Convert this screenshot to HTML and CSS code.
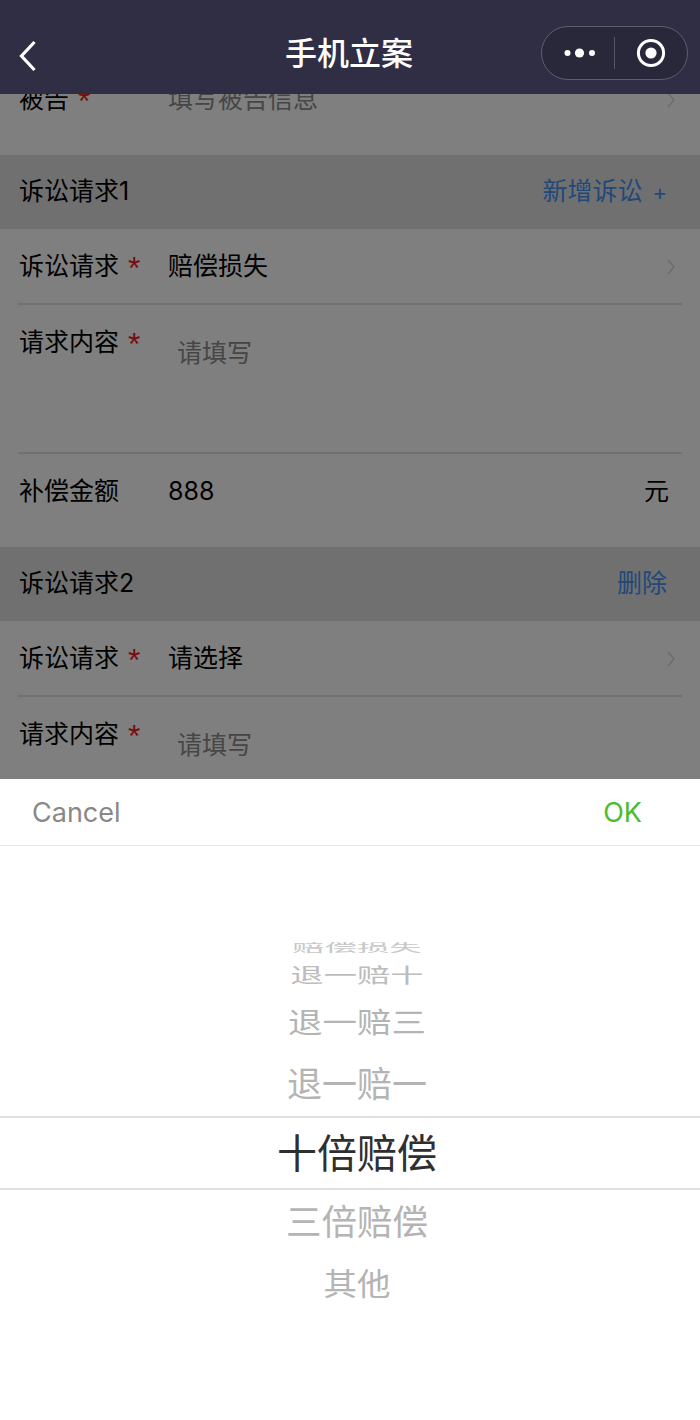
FILE: index.html
```html
<!DOCTYPE html>
<html lang="zh-CN">
<head>
<meta charset="utf-8">
<title>手机立案</title>
<link rel="stylesheet" href="styles.css">
</head>
<body>
<div class="app">
  <header class="nav">
    <svg class="back" width="24" height="34" viewBox="0 0 24 34"><path d="M18.5 3 5.5 17l13 14" fill="none" stroke="#fff" stroke-width="3.2"/></svg>
    <h1 class="title">手机立案</h1>
    <div class="capsule">
      <svg class="dots" width="34" height="12" viewBox="0 0 34 12"><circle cx="4.5" cy="6" r="3" fill="#fff"/><circle cx="16.5" cy="6" r="4.6" fill="#fff"/><circle cx="29" cy="6" r="3" fill="#fff"/></svg>
      <span class="capsule-sep"></span>
      <svg class="target" width="30" height="30" viewBox="0 0 30 30"><circle cx="15" cy="15" r="12.6" fill="none" stroke="#fff" stroke-width="3"/><circle cx="15" cy="15" r="5.6" fill="#fff"/></svg>
    </div>
  </header>
  <main class="form">
    <section class="group first">
      <div class="row"><span class="label">被告<i class="req">*</i></span><span class="value muted">填写被告信息</span><svg class="chev" width="10" height="16" viewBox="0 0 10 16"><path d="M2 1l6 7-6 7" fill="none" stroke="#d6d6d6" stroke-width="1.4"/></svg></div>
    </section>
    <section class="group">
      <div class="head"><span>诉讼请求1</span><span class="link">新增诉讼<b class="plus">+</b></span></div>
      <div class="row line"><span class="label">诉讼请求<i class="req">*</i></span><span class="value">赔偿损失</span><svg class="chev" width="10" height="16" viewBox="0 0 10 16"><path d="M2 1l6 7-6 7" fill="none" stroke="#d6d6d6" stroke-width="1.4"/></svg></div>
      <div class="row area line"><span class="label">请求内容<i class="req">*</i></span><span class="value muted indent">请填写</span></div>
      <div class="row"><span class="label">补偿金额</span><span class="value">888</span><span class="unit">元</span></div>
    </section>
    <section class="group">
      <div class="head"><span>诉讼请求2</span><span class="link">删除</span></div>
      <div class="row line"><span class="label">诉讼请求<i class="req">*</i></span><span class="value">请选择</span><svg class="chev" width="10" height="16" viewBox="0 0 10 16"><path d="M2 1l6 7-6 7" fill="none" stroke="#d6d6d6" stroke-width="1.4"/></svg></div>
      <div class="row area"><span class="label">请求内容<i class="req">*</i></span><span class="value muted indent">请填写</span></div>
    </section>
  </main>
  <div class="mask"></div>
  <div class="sheet">
    <div class="actions"><span class="cancel">Cancel</span><span class="ok">OK</span></div>
    <div class="wheel">
      <div class="item i-top"><span>赔偿损失</span></div>
      <div class="item i-a"><span>退一赔十</span></div>
      <div class="item i-b"><span>退一赔三</span></div>
      <div class="item i-c"><span>退一赔一</span></div>
      <div class="item i-on"><span>十倍赔偿</span></div>
      <div class="item i-d"><span>三倍赔偿</span></div>
      <div class="item i-e"><span>其他</span></div>
    </div>
  </div>
</div>
</body>
</html>
```
FILE: styles.css
```css
* { box-sizing: border-box; }
html, body { margin: 0; padding: 0; }
body { font-family: "Inter", "Liberation Sans", "Noto Sans CJK SC", sans-serif; }
.app { position: relative; width: 700px; height: 1420px; overflow: hidden; background: #fff; display: flex; flex-direction: column; }

.nav { position: relative; z-index: 3; flex: none; height: 94px; background: #302e45; display: flex; align-items: center; }
.back { margin: 18px 0 0 16px; flex: none; }
.title { position: absolute; left: 0; right: 2px; top: 31px; margin: 0; text-align: center; color: #fff; font-size: 32px; line-height: 40px; font-weight: 500; font-family: "Noto Sans CJK SC", sans-serif; }
.capsule { position: absolute; right: 12px; top: 26px; width: 147px; height: 54px; border: 1px solid #5f5d70; border-radius: 27px; background: #29273a; display: flex; align-items: center; }
.dots { margin-left: 21px; flex: none; }
.capsule-sep { width: 1px; height: 32px; background: #555366; margin-left: 17px; }
.target { margin-left: 21px; flex: none; }

.form { flex: none; margin-top: -33px; font-family: "Inter", "Noto Sans CJK SC", sans-serif; font-size: 25px; color: #000; }
.group { margin-bottom: 19px; background: #fff; }
.head { height: 74px; background: #e1e1e1; display: flex; justify-content: space-between; align-items: center; padding: 0 33px 6px 19px; }
.link { color: #4590f5; }
.plus { font-weight: 400; font-size: 22px; margin-left: 10px; }
.row { position: relative; height: 75px; display: flex; align-items: center; padding: 0 31px 0 19px; }
.first .row { padding-top: 2px; }
.row.line::after { content: ""; position: absolute; left: 18px; right: 18px; bottom: -1px; height: 2px; background: #e0e0e0; }
.row.area { height: 150px; align-items: flex-start; padding-top: 20px; }
.row.area.line::after { bottom: 0; }
.area + .row { height: 74px; }
.label { width: 149px; flex: none; line-height: 37px; }
.req { font-style: normal; font-family: "Liberation Sans", sans-serif; color: #f01c18; margin-left: 9px; font-size: 32px; line-height: 0; vertical-align: -4px; }
.value { flex: 1; line-height: 37px; }
.muted { color: #8c8c8c; }
.indent { padding: 11px 0 0 9px; }
.chev { flex: none; margin-right: -7px; }
.unit { line-height: 37px; }

.mask { position: absolute; left: 0; top: 94px; right: 0; bottom: 0; z-index: 1; background: rgba(0, 0, 0, .5); }

.sheet { position: absolute; left: 0; right: 0; top: 779px; bottom: 0; z-index: 2; background: #fff; display: flex; flex-direction: column; }
.actions { flex: none; height: 67px; border-bottom: 1px solid #e6e6e6; display: flex; justify-content: space-between; align-items: center; padding: 0 58px 0 32px; font-size: 27px; }
.cancel { color: #888; }
.ok { color: #4dbb2f; }

.wheel { flex: none; margin-top: 95px; padding: 0 0 0 14px; font-family: "Noto Sans CJK SC", sans-serif; text-align: center; color: #b4b4b4; }
.item { display: flex; justify-content: center; align-items: center; overflow: hidden; }
.i-top { height: 15px; font-size: 22px; align-items: flex-start; color: #c8c8c8; padding-top: 1px; }
.i-top span { transform: scale(1.47, .5); line-height: 18px; transform-origin: center top; }
.i-a { height: 38px; font-size: 33px; color: #bcbcbc; padding-bottom: 2px; }
.i-a span { transform: scale(1.01, .62); }
.i-b { height: 56px; font-size: 34.5px; padding-bottom: 4px; }
.i-b span { transform: scaleY(.84); }
.i-c { height: 66px; font-size: 35px; padding-bottom: 3px; }
.i-on { height: 74px; font-size: 40px; color: #2f2f2f; border-top: 2px solid #e0e0e0; border-bottom: 2px solid #e0e0e0; margin-left: -14px; padding: 0 0 5px 14px; }
.i-d { height: 67px; font-size: 35.5px; padding-bottom: 9px; }
.i-e { height: 55px; font-size: 33.5px; padding-bottom: 6px; }
.i-e span { transform: scaleY(.9); }
```
